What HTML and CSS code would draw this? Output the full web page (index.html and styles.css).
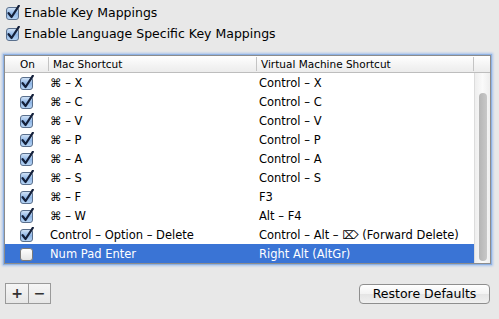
FILE: index.html
```html
<!DOCTYPE html>
<html lang="en">
<head>
    <meta charset="UTF-8">
    <title>Key Mappings</title>
    <link rel="stylesheet" href="styles.css">
</head>
<body>
    <svg width="0" height="0" class="defs">
        <symbol id="cb-on" viewBox="0 0 16 16">
            <rect x="1.5" y="2.5" width="12" height="12" rx="2.5" fill="url(#cbfill)" stroke="#5a6f8c"/>
            <path d="M3.6 8.2 L6.6 12 L13.8 0.8" fill="none" stroke="#14203a" stroke-width="2.2" stroke-linecap="round" stroke-linejoin="round"/>
        </symbol>
        <symbol id="cb-off" viewBox="0 0 16 16">
            <rect x="1.5" y="2.5" width="12" height="12" rx="2.5" fill="url(#cbwhite)" stroke="#7a7a7a"/>
        </symbol>
        <linearGradient id="cbfill" x1="0" y1="0" x2="0" y2="1">
            <stop offset="0" stop-color="#d6e6f8"/>
            <stop offset="0.5" stop-color="#8fb6e6"/>
            <stop offset="1" stop-color="#b9d6f5"/>
        </linearGradient>
        <linearGradient id="cbwhite" x1="0" y1="0" x2="0" y2="1">
            <stop offset="0" stop-color="#ffffff"/>
            <stop offset="1" stop-color="#e4e4e4"/>
        </linearGradient>
    </svg>

    <div class="options">
        <label class="option"><svg class="cb"><use href="#cb-on"/></svg>Enable Key Mappings</label>
        <label class="option"><svg class="cb"><use href="#cb-on"/></svg>Enable Language Specific Key Mappings</label>
    </div>

    <div class="table">
        <div class="head">
            <div class="th th-on">On</div>
            <div class="th">Mac Shortcut</div>
            <div class="th">Virtual Machine Shortcut</div>
            <div class="th th-corner"></div>
        </div>
        <div class="body">
            <div class="rows">
                <div class="row"><span class="cell-on"><svg class="cb"><use href="#cb-on"/></svg></span><span>⌘ – X</span><span>Control – X</span></div>
                <div class="row"><span class="cell-on"><svg class="cb"><use href="#cb-on"/></svg></span><span>⌘ – C</span><span>Control – C</span></div>
                <div class="row"><span class="cell-on"><svg class="cb"><use href="#cb-on"/></svg></span><span>⌘ – V</span><span>Control – V</span></div>
                <div class="row"><span class="cell-on"><svg class="cb"><use href="#cb-on"/></svg></span><span>⌘ – P</span><span>Control – P</span></div>
                <div class="row"><span class="cell-on"><svg class="cb"><use href="#cb-on"/></svg></span><span>⌘ – A</span><span>Control – A</span></div>
                <div class="row"><span class="cell-on"><svg class="cb"><use href="#cb-on"/></svg></span><span>⌘ – S</span><span>Control – S</span></div>
                <div class="row"><span class="cell-on"><svg class="cb"><use href="#cb-on"/></svg></span><span>⌘ – F</span><span>F3</span></div>
                <div class="row"><span class="cell-on"><svg class="cb"><use href="#cb-on"/></svg></span><span>⌘ – W</span><span>Alt – F4</span></div>
                <div class="row"><span class="cell-on"><svg class="cb"><use href="#cb-on"/></svg></span><span>Control – Option – Delete</span><span>Control – Alt – ⌦ (Forward Delete)</span></div>
                <div class="row selected"><span class="cell-on"><svg class="cb"><use href="#cb-off"/></svg></span><span>Num Pad Enter</span><span>Right Alt (AltGr)</span></div>
            </div>
            <div class="scroll"><div class="thumb"></div></div>
        </div>
    </div>

    <div class="footer">
        <div class="plusminus">
            <button class="pm">+</button>
            <button class="pm">−</button>
        </div>
        <button class="restore">Restore Defaults</button>
    </div>
</body>
</html>
```

FILE: styles.css
```css
body {
    margin: 0;
    width: 499px;
    height: 319px;
    background: #e8e8e8;
    font-family: "DejaVu Sans", sans-serif;
    font-size: 11.5px;
    color: #000;
    overflow: hidden;
}

.defs {
    position: absolute;
}

.options {
    padding-top: 2px;
    padding-left: 5px;
    font-size: 12.5px;
}

.option {
    display: flex;
    align-items: center;
    height: 21px;
    gap: 3px;
}

.cb {
    width: 16px;
    height: 16px;
    flex: none;
}

.table {
    margin: 11px 0 0 4px;
    width: 485px;
    border: 1px solid #8c8c8c;
    background: #fff;
    box-shadow: 0 0 0 1px #8fb2e3, 0 0 2px 2px #a9c4ec;
}

.head {
    display: grid;
    grid-template-columns: 44px 208px 217px 1fr;
    height: 16px;
    border-bottom: 1px solid #bdbdbd;
    background: linear-gradient(#ffffff, #f3f3f3 60%, #ececec);
    font-size: 10.5px;
}

.th {
    display: flex;
    align-items: center;
    padding-left: 4px;
    border-right: 1px solid #c4c4c4;
    margin: 1px 0;
}

.th-on {
    padding-left: 15px;
}

.th-corner {
    border-right: none;
}

.body {
    display: flex;
}

.rows {
    flex: 1;
}

.row {
    display: grid;
    grid-template-columns: 44px 208px 1fr;
    height: 19px;
    align-items: center;
}

.row span:nth-child(2) {
    padding-left: 1px;
}

.row span:nth-child(3) {
    padding-left: 2px;
}

.cell-on {
    display: flex;
    padding-left: 14px;
}

.selected {
    background: #3a74d5;
    color: #fff;
}

.scroll {
    width: 16px;
    border-left: 1px solid #dcdcdc;
    background: linear-gradient(90deg, #eeeeee, #fafafa 50%, #eeeeee);
    padding: 20px 0 2px 4px;
    box-sizing: border-box;
}

.thumb {
    width: 8px;
    height: 100%;
    border-radius: 4px;
    background: linear-gradient(90deg, #b5b5b5, #c8c8c8);
}

.footer {
    display: flex;
    justify-content: space-between;
    align-items: center;
    margin-top: 19px;
    padding: 0 9px 0 5px;
}

.plusminus {
    display: flex;
    border: 1px solid #9a9a9a;
}

.pm {
    width: 22px;
    height: 19px;
    padding: 0;
    border: none;
    background: linear-gradient(#f6f6f6, #e6e6e6);
    font-family: "DejaVu Sans", sans-serif;
    font-size: 14px;
    font-weight: bold;
    color: #333;
    line-height: 19px;
}

.pm + .pm {
    border-left: 1px solid #9a9a9a;
}

.restore {
    width: 131px;
    height: 20px;
    padding: 0;
    border: 1px solid #8e8e8e;
    border-radius: 4px;
    background: linear-gradient(#ffffff, #f2f2f2 50%, #e4e4e4 51%, #f0f0f0);
    font-family: "DejaVu Sans", sans-serif;
    font-size: 12.5px;
    color: #000;
}
```
